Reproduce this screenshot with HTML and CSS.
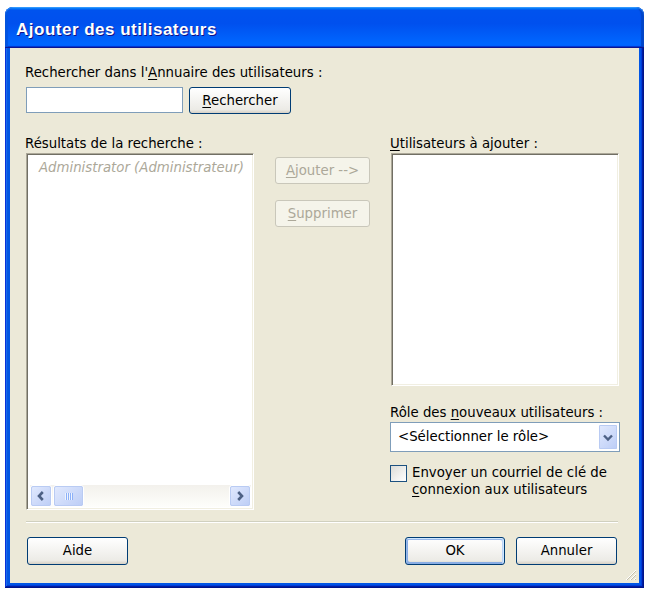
FILE: index.html
```html
<!DOCTYPE html>
<html lang="fr">
<head>
<meta charset="utf-8">
<title>Ajouter des utilisateurs</title>
<link rel="stylesheet" href="styles.css">
</head>
<body>
<div class="window">
  <div class="titlebar"><span class="title">Ajouter des utilisateurs</span></div>
  <div class="frame">
    <div class="client">
      <div class="label">Rechercher dans l'<u>A</u>nnuaire des utilisateurs :</div>
      <div class="search-row">
        <div class="textbox"></div>
        <button class="btn btn-search"><u>R</u>echercher</button>
      </div>
      <div class="main">
        <div class="col-left">
          <div class="label">Résultats de la recherche :</div>
          <div class="listbox results">
            <div class="list-area">
              <div class="list-item">Administrator (Administrateur)</div>
            </div>
            <div class="hscroll">
              <span class="sb-btn"><svg width="12" height="12" viewBox="0 0 12 12"><polyline points="7.8,2 4,6 7.8,10" fill="none" stroke="#4D6185" stroke-width="2.6"/></svg></span>
              <span class="sb-thumb"><svg width="8" height="7" viewBox="0 0 8 7"><path d="M0.5 0v7M2.5 0v7M4.5 0v7M6.5 0v7" stroke="#eef4fe" stroke-width="1"/><path d="M1.5 0v7M3.5 0v7M5.5 0v7M7.5 0v7" stroke="#8cb0f8" stroke-width="1"/></svg></span>
              <span class="sb-track"></span>
              <span class="sb-btn"><svg width="12" height="12" viewBox="0 0 12 12"><polyline points="4.2,2 8,6 4.2,10" fill="none" stroke="#4D6185" stroke-width="2.6"/></svg></span>
            </div>
          </div>
        </div>
        <div class="col-mid">
          <button class="btn btn-mid" disabled><u>A</u>jouter --&gt;</button>
          <button class="btn btn-mid" disabled><u>S</u>upprimer</button>
        </div>
        <div class="col-right">
          <div class="label label-right"><u>U</u>tilisateurs à ajouter :</div>
          <div class="listbox selected"></div>
          <div class="label label-right role-label">Rôle des <u>n</u>ouveaux utilisateurs :</div>
          <div class="combo">
            <span class="combo-text">&lt;Sélectionner le rôle&gt;</span>
            <span class="combo-btn"><svg width="12" height="9" viewBox="0 0 12 9"><polyline points="2,2.5 6,6.5 10,2.5" fill="none" stroke="#4D6185" stroke-width="2.4"/></svg></span>
          </div>
          <div class="check-row">
            <span class="checkbox"></span>
            <span class="check-text">Envoyer un courriel de clé de<br><u>c</u>onnexion aux utilisateurs</span>
          </div>
        </div>
      </div>
      <div class="separator"></div>
      <div class="footer">
        <button class="btn btn-aide">Aide</button>
        <div class="footer-right">
          <button class="btn btn-foot btn-default">OK</button>
          <button class="btn btn-foot">Annuler</button>
        </div>
      </div>
      <svg class="grip" width="12" height="12" viewBox="0 0 12 12">
        <path d="M11 1L1 11M11 5L5 11M11 9L9 11" stroke="#ffffff" stroke-width="1"/>
        <path d="M11 2L2 11M11 6L6 11M11 10L10 11" stroke="#c3bfac" stroke-width="1"/>
      </svg>
    </div>
  </div>
</div>
</body>
</html>
```
FILE: styles.css
```css
* { box-sizing: border-box; }

body {
  margin: 0;
  background: #ffffff;
  font-family: "DejaVu Sans", "Liberation Sans", sans-serif;
  font-size: 13.3px;
  color: #000000;
}

u { text-decoration: underline; text-underline-offset: 2px; }

.window {
  margin: 7px 0 0 5px;
  width: 639px;
}

.titlebar {
  height: 41px;
  border-radius: 8px 8px 0 0;
  background: linear-gradient(180deg, #0997ff, #0053ee 8%, #0050ee 40%, #0066ff 88%, #0066ff 93%, #005bff 95%, #003dd7 96%, #003dd7);
  box-shadow: inset 0 -1px 1px #0f1089, inset 0 1px 1px #379aff, inset 3px 0 1px #0054e3, inset -3px 0 1px #0045c9;
  padding: 13px 0 0 11px;
}

.title {
  font-family: "Liberation Sans", "DejaVu Sans", sans-serif;
  font-weight: bold;
  font-size: 17px;
  line-height: 20px;
  letter-spacing: 0.5px;
  color: #ffffff;
  text-shadow: 1px 1px #0f1089;
}

.frame {
  padding: 0 5px 5px 5px;
  background: #0055e5;
  box-shadow: inset -1px -1px #00138c, inset 1px 0 #0831d9, inset -2px -2px #001ea0, inset 2px 0 #166aee, inset -3px -3px #003bda, inset 3px 0 #0855dd;
}

.client {
  position: relative;
  height: 535px;
  background: #ece9d8;
  padding: 16px 21px 0 16px;
}

.label {
  line-height: 18px;
  margin-left: -1px;
  white-space: nowrap;
}

.search-row {
  display: flex;
  align-items: flex-start;
  gap: 6px;
  margin-top: 5px;
}

.textbox {
  width: 157px;
  height: 26px;
  background: #ffffff;
  border: 1px solid #7f9db9;
}

.btn {
  font-family: inherit;
  font-size: 13.3px;
  color: #000000;
  background: linear-gradient(180deg, #ffffff, #ecebe6 86%, #d6d0c5);
  border: 1px solid #003c74;
  border-radius: 3px;
  padding: 0;
  margin: 0;
  line-height: 18px;
}

.btn:disabled {
  color: #aca899;
  background: #f5f4ea;
  border-color: #c9c7ba;
}

.btn-search {
  width: 102px;
  height: 27px;
}

.main {
  display: grid;
  grid-template-columns: 228px 95px 228px;
  column-gap: 21px;
  margin-top: 21px;
}

.main > .col-right { margin-left: -1px; }

.listbox {
  background: #ffffff;
  border: 1px solid;
  border-color: #aca899 #ffffff #ffffff #aca899;
  box-shadow: inset 1px 1px #716f64, inset -1px -1px #f1efe2;
}

.results {
  height: 357px;
  display: flex;
  flex-direction: column;
  padding: 2px 2px 1px 3px;
}

.list-area { flex: 1; }

.list-item {
  font-style: italic;
  color: #aca899;
  padding: 4px 0 0 9px;
  line-height: 16px;
  white-space: nowrap;
}

.hscroll {
  height: 22px;
  display: flex;
  align-items: stretch;
  background: linear-gradient(180deg, #f3f1ec, #fefefb);
  margin-bottom: 1px;
}

.sb-btn, .sb-thumb {
  display: flex;
  align-items: center;
  justify-content: center;
  border: 1px solid #ffffff;
  outline: 1px solid #b9cbf3;
  outline-offset: -2px;
  border-radius: 3px;
  background: linear-gradient(135deg, #e2eafe, #bccdf6);
}

.sb-btn { width: 22px; }

.sb-thumb {
  width: 31px;
  margin-left: 1px;
}

.sb-track { flex: 1; }

.col-mid {
  display: flex;
  flex-direction: column;
  gap: 16px;
  padding-top: 22px;
}

.btn-mid {
  width: 95px;
  height: 27px;
}

.col-right {
  display: flex;
  flex-direction: column;
}

.label-right { margin-left: 0; }

.selected {
  height: 233px;
  margin-left: 1px;
}

.role-label { margin-top: 18px; }

.combo {
  height: 30px;
  width: 230px;
  display: flex;
  align-items: stretch;
  background: #ffffff;
  border: 1px solid #7f9db9;
  padding: 1px;
}

.combo-text {
  flex: 1;
  padding-left: 6px;
  line-height: 26px;
  white-space: nowrap;
}

.combo-btn {
  width: 20px;
  display: flex;
  align-items: center;
  justify-content: center;
  border: 1px solid #ffffff;
  outline: 1px solid #b9cbf3;
  outline-offset: -2px;
  border-radius: 2px;
  background: linear-gradient(135deg, #e2eafe, #bccdf6);
}

.check-row {
  display: flex;
  align-items: flex-start;
  gap: 5px;
  margin-top: 12px;
}

.checkbox {
  flex: none;
  width: 17px;
  height: 17px;
  margin-top: 1px;
  border: 1px solid #1c5180;
  background: linear-gradient(135deg, #dcdcd7, #ffffff);
}

.check-text {
  line-height: 17px;
  white-space: nowrap;
}

.separator {
  margin-top: 11px;
  height: 2px;
  border-top: 1px solid #d0d0bf;
  border-bottom: 1px solid #ffffff;
}

.footer {
  display: flex;
  justify-content: space-between;
  margin-top: 14px;
}

.btn-aide {
  width: 101px;
  height: 28px;
  margin-left: 1px;
}

.footer-right {
  display: flex;
  gap: 11px;
  margin-right: 1px;
}

.btn-foot {
  width: 101px;
  height: 28px;
}

.btn-default {
  width: 100px;
  box-shadow: inset -1px 1px #cee7ff, inset 1px 2px #98b8ea, inset -2px 2px #bcd4f6, inset 1px -1px #89ade4, inset 2px -2px #89ade4;
}

.grip {
  position: absolute;
  right: 2px;
  bottom: 2px;
}
```
